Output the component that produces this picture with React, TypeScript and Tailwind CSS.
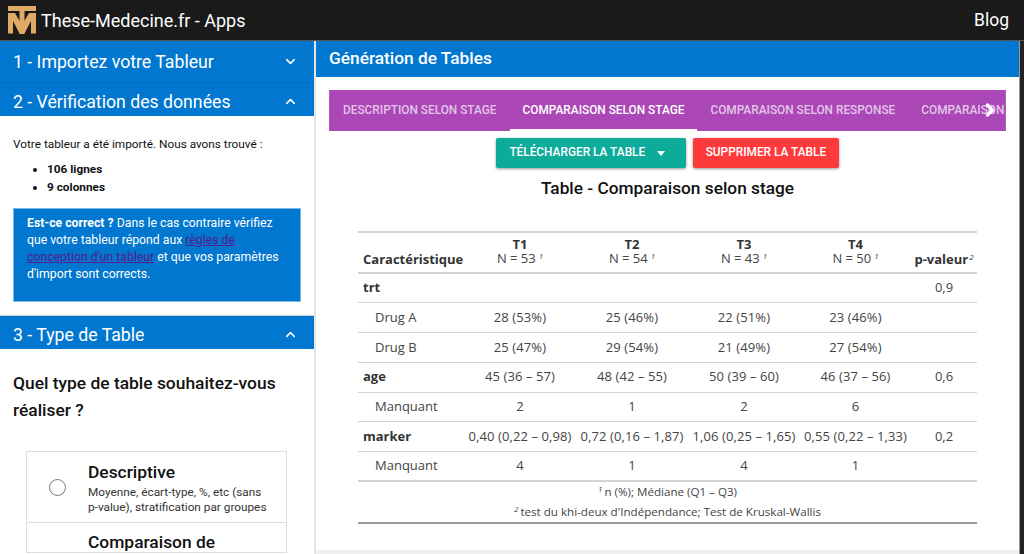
import { ChevronDown, ChevronUp, ChevronRight } from "lucide-react";

const tabs = [
  { label: "DESCRIPTION SELON STAGE", active: false },
  { label: "COMPARAISON SELON STAGE", active: true },
  { label: "COMPARAISON SELON RESPONSE", active: false },
  { label: "COMPARAISON SELON GRADE", active: false },
];

const rows = [
  { name: "trt", bold: true, cells: ["", "", "", ""], p: "0,9" },
  { name: "Drug A", cells: ["28 (53%)", "25 (46%)", "22 (51%)", "23 (46%)"], p: "" },
  { name: "Drug B", cells: ["25 (47%)", "29 (54%)", "21 (49%)", "27 (54%)"], p: "" },
  { name: "age", bold: true, cells: ["45 (36 – 57)", "48 (42 – 55)", "50 (39 – 60)", "46 (37 – 56)"], p: "0,6" },
  { name: "Manquant", cells: ["2", "1", "2", "6"], p: "" },
  { name: "marker", bold: true, cells: ["0,40 (0,22 – 0,98)", "0,72 (0,16 – 1,87)", "1,06 (0,25 – 1,65)", "0,55 (0,22 – 1,33)"], p: "0,2" },
  { name: "Manquant", cells: ["4", "1", "4", "1"], p: "" },
];

const heads = [
  { t: "T1", n: "N = 53" },
  { t: "T2", n: "N = 54" },
  { t: "T3", n: "N = 43" },
  { t: "T4", n: "N = 50" },
];

function Logo() {
  return (
    <svg width="28" height="28" viewBox="0 0 28 28" className="shrink-0">
      <path d="M0 0H28V5H16.5V28H11.5V5H0Z" fill="#dfa966" />
      <path d="M0 7H7L14 19L21 7H28V27.5H23V15L16.5 27.5H11.5L5 15V27.5H0Z" fill="#dfa966" />
    </svg>
  );
}

function SideHeader({ title, open, className }: { title: string; open?: boolean; className: string }) {
  return (
    <div className={`flex items-center justify-between bg-[#0277cf] pl-[13px] pr-[16px] text-white ${className}`}>
      <span className="text-[17.7px] leading-[24px]">{title}</span>
      {open ? <ChevronUp size={15} strokeWidth={2.5} /> : <ChevronDown size={15} strokeWidth={2.5} />}
    </div>
  );
}

export default function App() {
  return (
    <div className="flex h-[554px] w-[1024px] flex-col overflow-hidden bg-white font-['Roboto',sans-serif] text-[#111]">
      {/* top bar */}
      <header className="flex h-[41px] shrink-0 items-center justify-between border-b border-[#555] bg-[#1a1a1a] pl-2 pr-[15px] text-white">
        <div className="flex items-center gap-[5px]">
          <Logo />
          <span className="text-[18px]">These-Medecine.fr - Apps</span>
        </div>
        <span className="text-[17.5px]">Blog</span>
      </header>

      <div className="flex min-h-0 flex-1">
        {/* left column */}
        <aside className="w-[314px] shrink-0 overflow-hidden">
          <SideHeader title="1 - Importez votre Tableur" className="h-[41px]" />
          <SideHeader title="2 - Vérification des données" open className="h-[34px] border-t border-[#026bba] pt-[4px]" />
          <div className="px-[13px] pb-[13px] pt-[19px] text-[11.8px] leading-[18px]">
            <p>Votre tableur a été importé. Nous avons trouvé :</p>
            <ul className="mt-[7px] list-disc pl-[34px] font-bold">
              <li>106 lignes</li>
              <li>9 colonnes</li>
            </ul>
            <div className="mt-[12px] h-[94px] border border-[#7bb8e6] bg-[#0277cf] pb-[6px] pl-[13px] pr-[17px] pt-[6px] text-[12.25px] leading-[17px] text-white">
              <strong>Est-ce correct ?</strong> Dans le cas contraire vérifiez que votre tableur répond aux{" "}
              <a href="#" className="text-[#551a8b] underline">règles de conception d'un tableur</a>{" "}
              et que vos paramètres d'import sont corrects.
            </div>
          </div>
          <SideHeader title="3 - Type de Table" open className="h-[34px] border-t border-[#ccc] pt-[4px]" />
          <div className="px-[13px] pt-[21px]">
            <h3 className="text-[17.4px] font-medium leading-[27px]">Quel type de table souhaitez-vous réaliser ?</h3>
            <div className="ml-[13px] mt-[27px] w-[261px] border border-[#ddd]">
              <div className="flex h-[71px] items-center border-b border-[#ddd]">
                <span className="ml-[22px] h-[17px] w-[17px] shrink-0 rounded-full border border-[#777]" />
                <div className="ml-[22px] w-[180px] pt-[3px]">
                  <div className="text-[17.4px] font-medium leading-[20px]">Descriptive</div>
                  <div className="mt-[3px] text-[11.8px] leading-[15px] text-[#333]">
                    Moyenne, écart-type, %, etc (sans
                    <br />
                    p-value), stratification par groupes
                  </div>
                </div>
              </div>
              <div className="pl-[61px] pt-[9px] text-[17.4px] font-medium leading-[20px]">Comparaison de</div>
            </div>
          </div>
        </aside>

        <div className="w-[2px] shrink-0 bg-[#e4e4e4]" />

        {/* main panel */}
        <main className="flex min-w-0 flex-1 flex-col border-r border-[#999]">
          <div className="flex h-[36px] shrink-0 items-center bg-[#0277cf] pl-[13px] text-[17.3px] font-medium text-white">Génération de Tables</div>
          <div className="flex min-h-0 flex-1 flex-col pl-[13px] pt-[13px]">
            <nav className="relative flex h-[41px] w-[677px] shrink-0 overflow-hidden border-x border-[#b05cc4] bg-[#ab47b6] text-[11.85px] font-medium">
              {tabs.map((t) => (
                <div
                  key={t.label}
                  className={`flex h-full shrink-0 items-center whitespace-nowrap border-b-2 px-[13px] pt-[3px] ${t.active ? "border-white text-white" : "border-transparent text-white/70"}`}
                >
                  {t.label}
                </div>
              ))}
              <ChevronRight size={20} strokeWidth={4} className="absolute right-[5px] top-[10px] text-white" />
            </nav>

            <div className="mt-[7px] flex w-[677px] justify-center gap-[7px] text-[11.85px] font-medium text-white">
              <button className="flex h-[30px] items-center rounded-[2px] bg-[#0dab9a] pl-[13px] pr-[21px] shadow-[0_1px_3px_rgba(0,0,0,0.4)]">
                TÉLÉCHARGER LA TABLE
                <span className="ml-[12px] h-0 w-0 border-x-[4.5px] border-t-[5px] border-x-transparent border-t-white" />
              </button>
              <button className="h-[30px] rounded-[2px] bg-[#ff3a3a] px-[12.5px] shadow-[0_1px_3px_rgba(0,0,0,0.4)]">SUPPRIMER LA TABLE</button>
            </div>

            <h2 className="mt-[10px] w-[677px] text-center text-[17.3px] font-medium leading-[21px]">Table - Comparaison selon stage</h2>

            <table className="ml-[29px] mt-[32px] w-[619px] table-fixed border-collapse font-['Open_Sans',sans-serif] text-[13px] text-[#444]">
              <colgroup>
                <col className="w-[106px]" />
                <col className="w-[112px]" />
                <col className="w-[112px]" />
                <col className="w-[112px]" />
                <col className="w-[111px]" />
                <col className="w-[66px]" />
              </colgroup>
              <thead>
                <tr className="h-[41px] border-y-2 border-[#d3d3d3] align-bottom leading-[14px]">
                  <th className="whitespace-nowrap pb-[6px] pl-[5px] text-left font-bold text-[#333]">Caractéristique</th>
                  {heads.map((h) => (
                    <th key={h.t} className="whitespace-nowrap pb-[7px] text-center font-normal">
                      <div className="font-bold text-[#333]">{h.t}</div>
                      <div>
                        {h.n}
                        <sup className="ml-[3px] text-[8px] italic">1</sup>
                      </div>
                    </th>
                  ))}
                  <th className="whitespace-nowrap pb-[6px] text-center font-bold text-[#333]">
                    p-valeur
                    <sup className="ml-[1px] text-[8px] font-normal italic">2</sup>
                  </th>
                </tr>
              </thead>
              <tbody>
                {rows.map((r, i) => (
                  <tr key={i} className="h-[29.75px] border-b border-[#d3d3d3]">
                    <td className={r.bold ? "whitespace-nowrap pl-[5px] font-bold text-[#333]" : "whitespace-nowrap pl-[17px]"}>{r.name}</td>
                    {r.cells.map((c, j) => (
                      <td key={j} className="whitespace-nowrap text-center tracking-[0.1px]">{c}</td>
                    ))}
                    <td className="text-center">{r.p}</td>
                  </tr>
                ))}
              </tbody>
              <tfoot>
                <tr className="border-y-2 border-t-[#d3d3d3] border-b-[#999]">
                  <td colSpan={6} className="text-center text-[11.6px] leading-[20px]">
                    <div><sup className="mr-[2px] text-[8px] italic">1</sup>n (%); Médiane (Q1 – Q3)</div>
                    <div><sup className="mr-[2px] text-[8px] italic">2</sup>test du khi-deux d'Indépendance; Test de Kruskal-Wallis</div>
                  </td>
                </tr>
              </tfoot>
            </table>
          </div>
          <div className="h-[4px] shrink-0 bg-[#f0f0f0]" />
        </main>

        {/* window edge */}
        <div className="w-[4px] shrink-0 bg-[#222]" />
      </div>
    </div>
  );
}
